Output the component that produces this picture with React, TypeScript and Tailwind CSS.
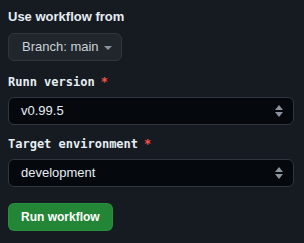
export default function App() {
    return (
        <div className="w-[304px] h-[243px] bg-[#161b22] px-2 pt-[7px] text-[#e6edf3]" style={{ fontFamily: '"Liberation Sans", Arial, sans-serif' }}>
            <div className="text-[13px] font-bold leading-[20px]">Use workflow from</div>

            <button className="mt-[6px] h-[28px] flex items-center gap-[5px] pl-[13px] pr-[9px] rounded-md border border-[#30363d] bg-[#21262d] text-[13px] text-[#c9d1d9] whitespace-nowrap">
                <span>Branch: main</span>
                <svg width="8" height="4" viewBox="0 0 8 4" className="mt-[1px]">
                    <path d="M0 0h8L4 4z" fill="#8b949e" />
                </svg>
            </button>

            <div className="mt-[12px] flex items-center gap-[6px] text-[12px] font-bold leading-[18px]" style={{ fontFamily: '"DejaVu Sans Mono", monospace' }}>
                <span>Runn version</span>
                <span className="text-[#f85149]">*</span>
            </div>
            <Select value="v0.99.5" className="mt-[6px]" />

            <div className="mt-[10px] flex items-center gap-[6px] text-[12px] font-bold leading-[18px]" style={{ fontFamily: '"DejaVu Sans Mono", monospace' }}>
                <span>Target environment</span>
                <span className="text-[#f85149]">*</span>
            </div>
            <Select value="development" className="mt-[6px]" />

            <button className="mt-[16px] h-[28px] px-[12px] rounded-md bg-[#238636] border border-[#2ea043]/40 text-white text-[12px] font-bold whitespace-nowrap">
                Run workflow
            </button>
        </div>
    );
}

function Select({ value, className }: { value: string; className?: string }) {
    return (
        <div className={`h-[28px] w-[286px] flex items-center justify-between pl-[12px] pr-[10px] rounded-md border border-[#30363d] bg-[#05080d] text-[13px] text-[#e6edf3] ${className ?? ""}`}>
            <span>{value}</span>
            <svg width="8" height="12" viewBox="0 0 8 12">
                <path d="M4 0L8 5H0z" fill="#8b949e" />
                <path d="M4 12L0 7h8z" fill="#8b949e" />
            </svg>
        </div>
    );
}
